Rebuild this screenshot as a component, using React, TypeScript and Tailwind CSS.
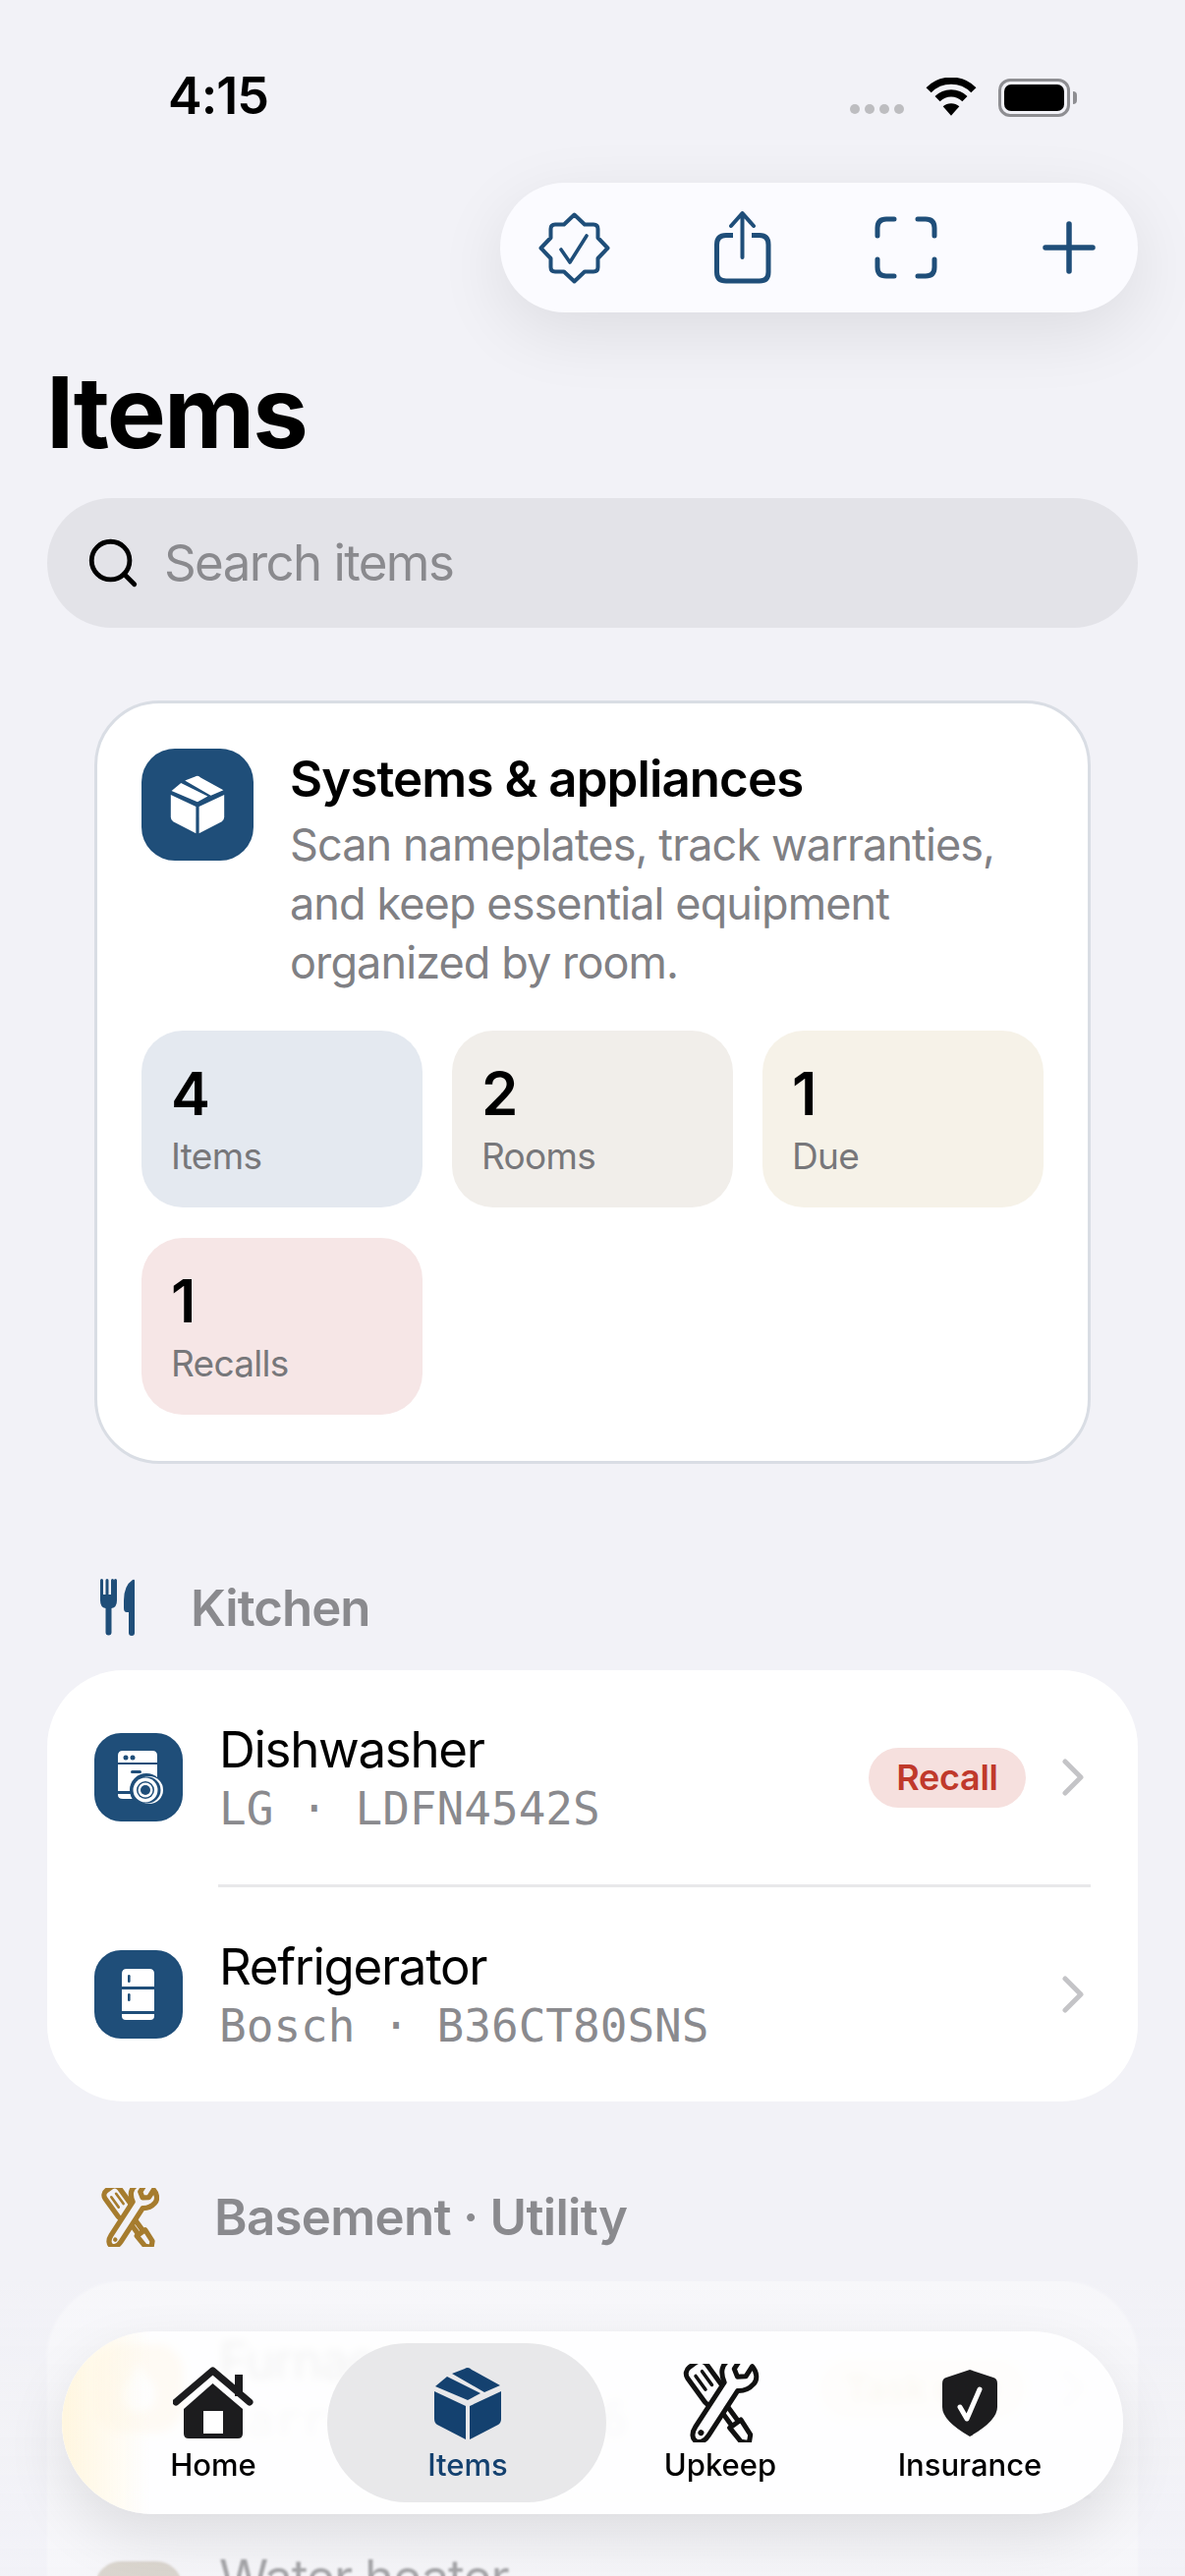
import React from 'react';
import { Search } from 'lucide-react';

const navy = '#1f4e79';

const BoxIcon: React.FC<{ className?: string }> = ({ className }) => (
  <svg viewBox="0 0 70 75" className={className} fill="currentColor">
    <path d="M35 1Q37 1 39 3L68 19L52 26L19 7L32 2Q33 1 35 1Z" />
    <path d="M2 20L14 10L48 27L35 34Z" />
    <path d="M1 25L33 40V74L4 59Q1 57 1 53Z" />
    <path d="M69 25L37 40V74L66 59Q69 57 69 53Z" />
  </svg>
);

const ToolsIcon: React.FC<{ color: string; fill: string; className?: string; sw?: number }> = ({ color, fill, className, sw = 5 }) => (
  <svg viewBox="0 0 80 80" className={className} fill={fill} stroke={color} strokeWidth={sw} strokeLinejoin="round" strokeLinecap="round">
    <g transform="rotate(-36 40 40)">
      <rect x="28" y="-8" width="24" height="46" rx="8" />
      <path d="M36 3V20M44 3V20" strokeWidth="3.5" />
      <rect x="36" y="38" width="8" height="30" />
      <path d="M33 66H47L46 84L40 90L34 84Z" />
    </g>
    <g transform="rotate(33 40 40)">
      <path d="M33 -9C24 -6 20 2 23 10C25 15 29 18 32 20V74C32 90 48 90 48 74V20C53 17 57 12 58 5C59 -1 54 -7 47 -9V3L40 8L33 3Z" />
      <circle cx="40" cy="76" r="3" stroke="none" fill={color} />
    </g>
  </svg>
);

const Chevron: React.FC = () => (
  <svg viewBox="0 0 24 38" className="ml-[36px] w-[24px] h-[38px] shrink-0" fill="none" stroke="#c4c4c7" strokeWidth="5" strokeLinecap="round" strokeLinejoin="round">
    <path d="M4 3L20 19L4 35" />
  </svg>
);

const ListIconBox: React.FC<{ children: React.ReactNode; bg?: string }> = ({ children, bg = 'bg-[#1f4e79]' }) => (
  <div className={`w-[90px] h-[90px] shrink-0 rounded-[27px] ${bg}`}>
    <svg viewBox="0 0 90 90" className="w-full h-full">
      {children}
    </svg>
  </div>
);

const Tile: React.FC<{ n: string; label: string; bg: string }> = ({ n, label, bg }) => (
  <div className={`h-[180px] rounded-[42px] pl-[30px] pt-[31px] ${bg}`}>
    <div className="text-[60px] leading-[66px] font-semibold text-black">{n}</div>
    <div className="mt-[8px] text-[37px] leading-[46px] tracking-[-0.7px] text-[#77777a]">{label}</div>
  </div>
);

const Row: React.FC<{ icon: React.ReactNode; title: string; sub: string; badge?: React.ReactNode; h: string }> = ({ icon, title, sub, badge, h }) => (
  <div className={`flex items-center pl-12 pr-[54px] ${h}`}>
    {icon}
    <div className="ml-[37px] flex-1">
      <div className="text-[51px] leading-[62px] text-black tracking-[-1.3px]">{title}</div>
      <div className="mt-[2px] text-[46px] leading-[54px] text-[#8a8a8e] font-['DejaVu_Sans_Mono',monospace] whitespace-pre">{sub}</div>
    </div>
    {badge}
    <Chevron />
  </div>
);

const TabItem: React.FC<{ label: string; cls?: string; children: React.ReactNode }> = ({ label, cls = 'text-black', children }) => (
  <div className="flex flex-col items-center">
    <div className="h-[84px] flex items-center">{children}</div>
    <div className={`mt-[1px] text-[31px] leading-[40px] font-medium ${cls}`}>{label}</div>
  </div>
);

const App: React.FC = () => {
  return (
    <div className="relative w-[1206px] h-[2622px] overflow-hidden bg-[#f2f2f7] font-['Inter',sans-serif]">
      {/* status bar */}
      <div className="h-[186px] pt-[67px] pl-[171px] pr-[110px] flex items-start justify-between">
        <div className="text-[52px] leading-[62px] font-semibold text-black tracking-[-1px]">4:15</div>
        <div className="flex items-center pt-[12px]">
          <div className="flex gap-[5px] mt-[24px] mr-[22px]">
            <span className="w-[10px] h-[10px] rounded-full bg-[#bdbdc0]" />
            <span className="w-[10px] h-[10px] rounded-full bg-[#bdbdc0]" />
            <span className="w-[10px] h-[10px] rounded-full bg-[#bdbdc0]" />
            <span className="w-[10px] h-[10px] rounded-full bg-[#bdbdc0]" />
          </div>
          <svg viewBox="0 0 50 38" className="w-[52px] h-[40px] mr-[22px]" fill="none" stroke="#000" strokeWidth="7">
            <path d="M3 12A31 31 0 0 1 47 12" />
            <path d="M11.6 20.6A19 19 0 0 1 38.4 20.6" />
            <path d="M25 37L17 28A12 12 0 0 1 33 28Z" fill="#000" stroke="none" />
          </svg>
          <div className="w-[73px] h-[39px] rounded-[12px] border-[3px] border-[#8e8e92] p-[3px]">
            <div className="w-full h-full rounded-[7px] bg-black" />
          </div>
          <div className="w-[4px] h-[13px] ml-[3px] rounded-r-full bg-[#8e8e92]" />
        </div>
      </div>

      {/* toolbar */}
      <div className="flex justify-end pr-12">
        <div className="w-[649px] h-[132px] rounded-[66px] bg-[#fbfbff] shadow-[0_20px_70px_rgba(0,0,0,0.09)] relative flex items-center pl-[39px]">
          <svg viewBox="0 0 73 73" className="w-[73px] h-[73px]" fill="none" stroke={navy} strokeWidth="4" strokeLinecap="round" strokeLinejoin="round">
            <path d="M36.5 2.5L47 12.5H56Q60.5 12.5 60.5 17V26L70.5 36.5L60.5 47V56Q60.5 60.5 56 60.5H47L36.5 70.5L26 60.5H17Q12.5 60.5 12.5 56V47L2.5 36.5L12.5 26V17Q12.5 12.5 17 12.5H26Z" />
            <path d="M23 38L32 51L49 24" strokeWidth="3.6" />
          </svg>
          <svg viewBox="0 0 60 76" className="ml-[104px] w-[60px] h-[76px]" fill="none" stroke={navy} strokeWidth="5" strokeLinecap="round" strokeLinejoin="round">
            <path d="M21 25.5H14Q4.5 25.5 4.5 35V63Q4.5 72 14 72H48Q57 72 57 63V35Q57 25.5 48 25.5H40" strokeLinecap="butt" />
            <path d="M30.5 3V48M19 16L30.5 3L42 16" strokeWidth="4" />
          </svg>
          <svg viewBox="0 0 64 64" className="ml-[105px] w-[64px] h-[64px]" fill="none" stroke={navy} strokeWidth="5" strokeLinecap="round">
            <path d="M3 20V12Q3 3 12 3H20M44 3H52Q61 3 61 12V20M61 44V52Q61 61 52 61H44M20 61H12Q3 61 3 52V44" />
          </svg>
          <svg viewBox="0 0 54 54" className="ml-[107px] w-[54px] h-[54px]" fill="none" stroke={navy} strokeWidth="5.5" strokeLinecap="round">
            <path d="M27 3V51M3 27H51" />
          </svg>
        </div>
      </div>

      {/* title */}
      <h1 className="mt-[46px] pl-[47px] text-[101px] leading-[110px] font-bold text-black tracking-[-2px]">Items</h1>

      {/* search */}
      <div className="mt-[33px] mx-12 h-[132px] rounded-[66px] bg-[#e3e3e8] flex items-center pl-[38px]">
        <Search size={58} strokeWidth={2} className="text-black" />
        <span className="ml-[23px] text-[51px] text-[#8a8a8e] tracking-[-1.6px]">Search items</span>
      </div>

      {/* summary card */}
      <div className="mt-[74px] mx-[96px] h-[777px] rounded-[66px] bg-white border-[3px] border-[#d9dde4] px-[45px] pt-[46px]">
        <div className="flex">
          <div className="w-[114px] h-[114px] shrink-0 rounded-[34px] bg-[#1f4e79] flex items-center justify-center text-white">
            <BoxIcon className="w-[56px] h-[60px]" />
          </div>
          <div className="ml-[37px]">
            <div className="text-[51px] leading-[62px] font-semibold text-black tracking-[-0.9px]">Systems &amp; appliances</div>
            <div className="mt-[6px] text-[45px] leading-[60px] text-[#808084] tracking-[-0.9px]">
              Scan nameplates, track warranties,
              <br />
              and keep essential equipment
              <br />
              organized by room.
            </div>
          </div>
        </div>
        <div className="mt-[39px] grid grid-cols-3 gap-x-[30px] gap-y-[31px]">
          <Tile n="4" label="Items" bg="bg-[#e4e9f0]" />
          <Tile n="2" label="Rooms" bg="bg-[#f1eeea]" />
          <Tile n="1" label="Due" bg="bg-[#f6f2e8]" />
          <Tile n="1" label="Recalls" bg="bg-[#f6e6e6]" />
        </div>
      </div>

      {/* kitchen */}
      <div className="mt-[110px] h-[72px] pl-[102px] flex items-center gap-[56px]">
        <svg viewBox="0 0 36 58" className="w-[36px] h-[58px]" fill={navy}>
          <path d="M0 1.5a1.5 1.5 0 0 1 3 0V16h2.5V1.5a1.5 1.5 0 0 1 3 0V16H11V1.5a1.5 1.5 0 0 1 3 0V16h0V1.5a1.5 1.5 0 0 1 3 0V22Q17 29 11.5 30V54.5a3 3 0 0 1-6 0V30Q0 29 0 22Z" />
          <path d="M35 2V55a3 3 0 0 1-6 0V34H27Q24 34 24 30V22Q24 7 33 1Q35 0 35 2Z" />
        </svg>
        <span className="pt-[2px] text-[51px] font-semibold text-[#8a8a8e] tracking-[-1px]">Kitchen</span>
      </div>
      <div className="mt-[28px] mx-12 h-[439px] rounded-[78px] bg-white">
        <Row
          h="h-[218px]"
          icon={
            <ListIconBox>
              <path d="M24 30V23Q24 18 29 18H59Q64 18 64 23V30Z" fill="#fff" />
              <circle cx="32" cy="25" r="2.5" fill={navy} />
              <circle cx="39" cy="25" r="2.5" fill={navy} />
              <rect x="24" y="32" width="40" height="27" fill="#fff" />
              <path d="M24 62H64V63Q64 67 59 67H29Q24 67 24 63Z" fill="#fff" />
              <rect x="37" y="38" width="11" height="3" rx="1.5" fill={navy} />
              <circle cx="53" cy="58" r="17" fill={navy} />
              <circle cx="56" cy="58" r="14" fill="#fff" />
              <circle cx="54" cy="58" r="13.5" fill={navy} />
              <circle cx="52" cy="58" r="12.5" fill="#fff" />
              <circle cx="52" cy="58" r="9" fill={navy} />
              <circle cx="52" cy="58" r="7.5" fill="#fff" />
              <circle cx="52" cy="58" r="5" fill={navy} />
            </ListIconBox>
          }
          title="Dishwasher"
          sub="LG · LDFN4542S"
          badge={
            <div className="h-[61px] w-[160px] rounded-full bg-[#f6e0de] text-[#c0392b] text-[36px] font-semibold tracking-[-0.3px] flex items-center justify-center">Recall</div>
          }
        />
        <div className="h-[3px] ml-[174px] mr-12 bg-[#e8e8ea]" />
        <Row
          h="h-[218px]"
          icon={
            <ListIconBox>
              <path d="M28 37V24Q28 19 33 19H56Q61 19 61 24V37Z" fill="#fff" />
              <rect x="28" y="40" width="33" height="22" fill="#fff" />
              <path d="M28 65H61V67Q61 71 57 71H32Q28 71 28 67Z" fill="#fff" />
              <rect x="34" y="25" width="2.6" height="8" rx="1.3" fill={navy} />
              <rect x="34" y="44" width="2.6" height="8" rx="1.3" fill={navy} />
            </ListIconBox>
          }
          title="Refrigerator"
          sub="Bosch · B36CT80SNS"
        />
      </div>

      {/* basement */}
      <div className="mt-[82px] h-[72px] pl-[102px] flex items-center gap-[56px]">
        <ToolsIcon color="#a67c2e" fill="#f2f2f7" className="w-[60px] h-[60px]" sw={7} />
        <span className="text-[51px] font-semibold text-[#8a8a8e] tracking-[-0.7px]">Basement · Utility</span>
      </div>
      <div className="mt-[29px] mx-12 h-[600px] rounded-[78px] bg-white">
        <Row
          h="h-[218px]"
          icon={
            <ListIconBox bg="bg-[#f5a623]">
              <path d="M45 18C47 30 62 36 62 52A17 17 0 0 1 28 52C28 42 38 36 45 18Z" fill="#fff" />
            </ListIconBox>
          }
          title="Furnace"
          sub="Carrier · 59TP6"
          badge={
            <div className="h-[61px] w-[210px] rounded-full bg-[#f8e8c4] text-[#c08a1c] text-[36px] font-semibold flex items-center justify-center">Task due</div>
          }
        />
        <div className="h-[3px] ml-[174px] mr-12 bg-[#e8e8ea]" />
        <Row
          h="h-[218px]"
          icon={
            <ListIconBox bg="bg-[#a89878]">
              <rect x="30" y="20" width="30" height="50" rx="8" fill="#fff" />
            </ListIconBox>
          }
          title="Water heater"
          sub="Rheem · XG50"
        />
      </div>

      {/* fade under the floating tab bar */}
      <div className="absolute left-0 right-0 bottom-0 h-[300px] bg-gradient-to-b from-[#f2f2f7a0] to-[#f2f2f7b0] backdrop-blur-[1px]" />

      {/* tab bar */}
      <div className="absolute left-[63px] top-[2373px] w-[1080px] h-[186px] rounded-[93px] bg-[#ffffffdd] backdrop-blur-[4px] shadow-[0_24px_60px_rgba(0,0,0,0.1)]">
        <div className="absolute inset-0 rounded-[93px] overflow-hidden">
          <div className="w-[90px] h-full bg-gradient-to-r from-[#fff6df] to-[#fff6df00]" />
        </div>
        <div className="absolute left-[270px] top-[12px] w-[284px] h-[162px] rounded-[81px] bg-[#e8e8ea]" />
        <div className="relative h-full grid grid-cols-[308px_210px_304px_204px] pt-[31px]">
          <TabItem label="Home">
            <svg viewBox="0 0 82 74" className="w-[82px] h-[74px]" fill="#1c1c1e">
              <rect x="63" y="8" width="8" height="22" />
              <path d="M3 36L40.5 4L78 36" fill="none" stroke="#1c1c1e" strokeWidth="7" strokeLinecap="round" strokeLinejoin="round" />
              <path d="M11 43L40.5 17L71 43V68Q71 73 66 73H16Q11 73 11 68Z" />
              <rect x="31" y="45" width="20" height="23" fill="#fff" />
            </svg>
          </TabItem>
          <TabItem label="Items" cls="text-[#14416f]">
            <BoxIcon className="w-[70px] h-[75px] text-[#14416f]" />
          </TabItem>
          <TabItem label="Upkeep">
            <ToolsIcon color="#111" fill="#fdfdff" className="w-[80px] h-[80px]" />
          </TabItem>
          <TabItem label="Insurance">
            <svg viewBox="0 0 56 68" className="w-[56px] h-[68px]">
              <path d="M28 0L52 8Q56 9 56 14V38Q56 52 28 68Q0 52 0 38V14Q0 9 4 8Z" fill="#1c1c1e" />
              <path d="M18 38L25 50L38 20" fill="none" stroke="#fff" strokeWidth="5" strokeLinecap="round" strokeLinejoin="round" />
            </svg>
          </TabItem>
        </div>
      </div>
    </div>
  );
};

export default App;
